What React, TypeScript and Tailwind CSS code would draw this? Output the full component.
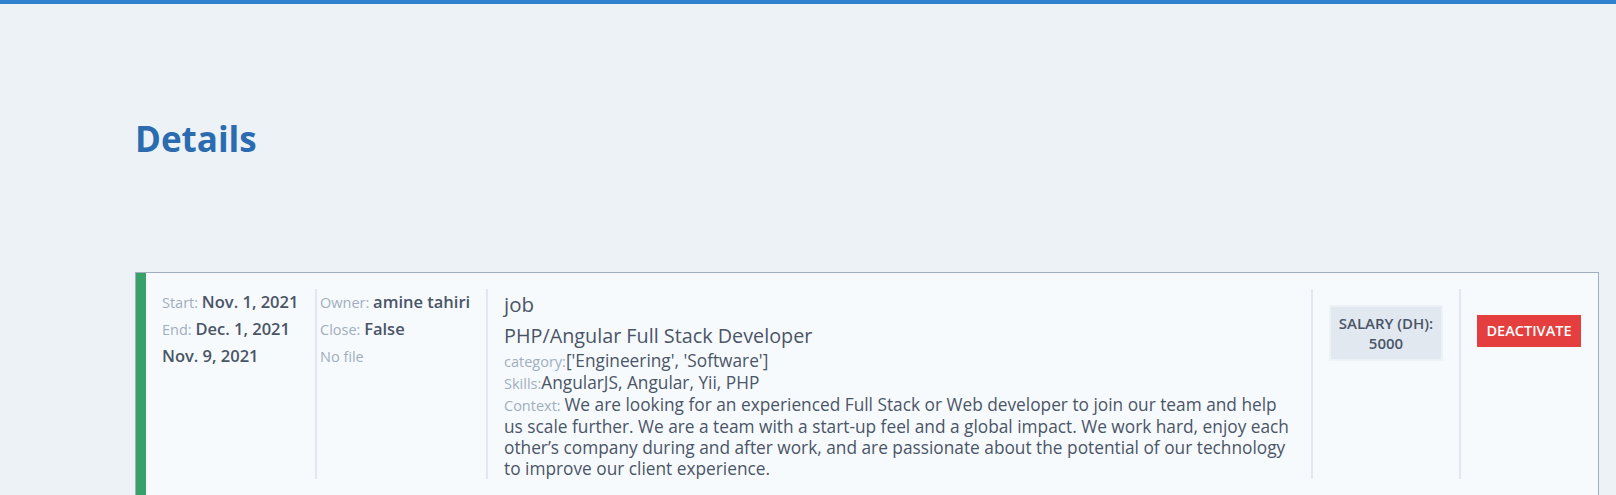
const Label = ({ children }: { children: React.ReactNode }) => (
  <span className="text-[14.5px] text-[#a0aec0]">{children}</span>
);

const App = () => {
  return (
    <div className="min-h-screen bg-[#edf2f7] font-['Open_Sans',sans-serif] text-[#4a5568]">
      <div className="h-1 bg-[#3182ce]" />
      <div className="pl-[135px] pr-[17px]">
        <h1 className="mt-[116px] text-[35px] font-bold leading-[37px] text-[#2b6cb0]">
          Details
        </h1>

        <div className="mt-[115px] flex border border-b-2 border-[#a0aec0] bg-[#f7fafc]">
          <div className="w-[10px] shrink-0 bg-[#38a169]" />

          {/* dates */}
          <div className="my-4 w-[171px] shrink-0 border-r-2 border-[#e2e8f0] pl-4 leading-[26px]">
            <p>
              <Label>Start: </Label>
              <span className="text-[16.5px] font-semibold">Nov. 1, 2021</span>
            </p>
            <p>
              <Label>End: </Label>
              <span className="text-[16.5px] font-semibold">Dec. 1, 2021</span>
            </p>
            <p className="text-[16.5px] font-semibold">Nov. 9, 2021</p>
          </div>

          {/* owner */}
          <div className="my-4 w-[171px] shrink-0 border-r-2 border-[#e2e8f0] pl-[3px] leading-[26px]">
            <p>
              <Label>Owner: </Label>
              <span className="text-[16.5px] font-semibold">amine tahiri</span>
            </p>
            <p>
              <Label>Close: </Label>
              <span className="text-[16.5px] font-semibold">False</span>
            </p>
            <p>
              <Label>No file</Label>
            </p>
          </div>

          {/* job */}
          <div className="my-4 w-[825px] shrink-0 border-r-2 border-[#e2e8f0] px-4 text-[17.3px] leading-[21px]">
            <p className="text-[20.5px] leading-[30px]">job</p>
            <p className="mt-[3px] text-[19.8px] leading-[28px]">
              PHP/Angular Full Stack Developer
            </p>
            <p>
              <Label>category:</Label>['Engineering', 'Software']
            </p>
            <p>
              <Label>Skills:</Label>AngularJS, Angular, Yii, PHP
            </p>
            <p className="whitespace-nowrap">
              <Label>Context: </Label>We are looking for an experienced Full Stack or Web developer to join our team and help
              <br />
              us scale further. We are a team with a start-up feel and a global impact. We work hard, enjoy each
              <br />
              other’s company during and after work, and are passionate about the potential of our technology
              <br />
              to improve our client experience.
            </p>
          </div>

          {/* salary */}
          <div className="my-4 w-[148px] shrink-0 border-r-2 border-[#e2e8f0] px-4 pt-4">
            <div className="whitespace-nowrap border-2 border-[#edf2f7] bg-[#e2e8f0] px-[5px] py-[6px] text-center text-[15px] font-semibold uppercase leading-5">
              Salary (DH):
              <br />
              5000
            </div>
          </div>

          {/* action */}
          <div className="flex-1 px-4 pt-[42px]">
            <button className="flex h-8 w-[104px] items-center justify-center bg-[#e53e3e] text-[14.5px] font-semibold uppercase text-white">
              Deactivate
            </button>
          </div>
        </div>
      </div>
    </div>
  );
};

export default App;
